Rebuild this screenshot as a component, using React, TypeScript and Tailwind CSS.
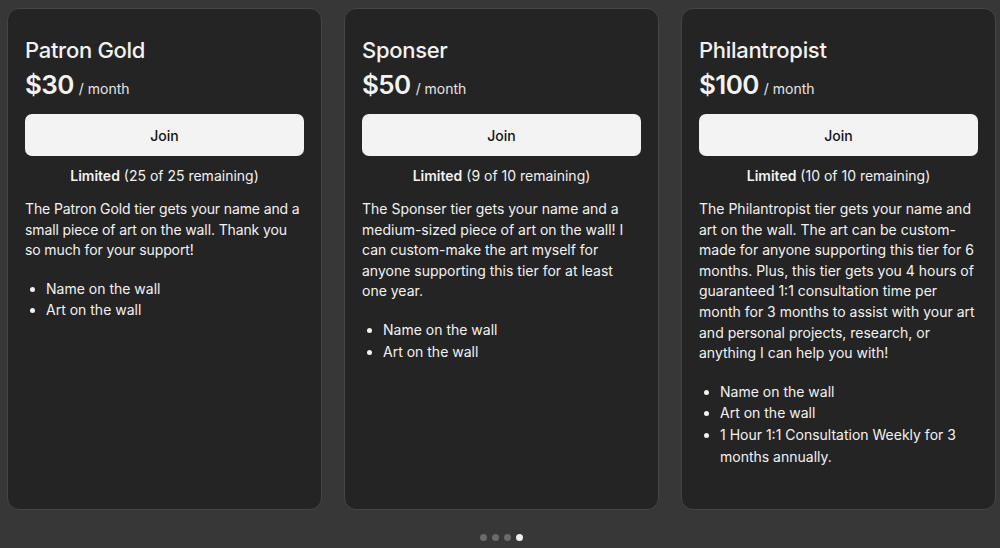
import React from "react";

const tiers = [
  {
    name: "Patron Gold",
    price: "$30",
    limited: "(25 of 25 remaining)",
    desc: "The Patron Gold tier gets your name and a small piece of art on the wall. Thank you so much for your support!",
    descClass: "tracking-[-0.12px]",
    items: ["Name on the wall", "Art on the wall"],
  },
  {
    name: "Sponser",
    price: "$50",
    limited: "(9 of 10 remaining)",
    desc: "The Sponser tier gets your name and a medium-sized piece of art on the wall! I can custom-make the art myself for anyone supporting this tier for at least one year.",
    descClass: "tracking-normal",
    items: ["Name on the wall", "Art on the wall"],
  },
  {
    name: "Philantropist",
    price: "$100",
    limited: "(10 of 10 remaining)",
    desc: "The Philantropist tier gets your name and art on the wall. The art can be custom-made for anyone supporting this tier for 6 months. Plus, this tier gets you 4 hours of guaranteed 1:1 consultation time per month for 3 months to assist with your art and personal projects, research, or anything I can help you with!",
    descClass: "tracking-normal",
    items: ["Name on the wall", "Art on the wall", "1 Hour 1:1 Consultation Weekly for 3 months annually."],
  },
];

export default function App() {
  return (
    <div
      className="w-[1000px] h-[548px] bg-[#373737] overflow-hidden flex flex-col"
      style={{ fontFamily: "Inter, 'Noto Sans', sans-serif" }}
    >
      <div className="flex gap-[22px] pl-[7px] pt-[8px]">
        {tiers.map((t) => (
          <div
            key={t.name}
            className="w-[315px] h-[502px] shrink-0 rounded-[12px] border border-[#454545] bg-[#242424] px-[17px] pt-[26px] text-[#f2f2f2]"
          >
            <div className="text-[22px] leading-[30px] font-medium tracking-[-0.3px]">{t.name}</div>
            <div className="flex items-baseline gap-[5px] mt-[2px]">
              <span className="text-[26px] leading-[36px] font-semibold tracking-[-0.6px]">{t.price}</span>
              <span className="text-[14px] text-[#e6e6e6]">/ month</span>
            </div>
            <button className="mt-[11px] w-full h-[42px] rounded-[7px] bg-[#f3f3f3] text-[#111] text-[14px] font-medium">
              Join
            </button>
            <div className="mt-[9px] text-center text-[14px] leading-[22px]">
              <span className="font-semibold">Limited</span> {t.limited}
            </div>
            <p className={`mt-[12px] text-[14px] leading-[20.6px] ${t.descClass}`}>{t.desc}</p>
            <ul className="mt-[17px] pl-[21px] list-disc text-[14px] leading-[21.7px]">
              {t.items.map((i) => (
                <li key={i}>{i}</li>
              ))}
            </ul>
          </div>
        ))}
      </div>
      <div className="flex justify-center gap-[5px] mt-[24px] pl-[3px]">
        <span className="w-[7px] h-[7px] rounded-full bg-[#6a6a6a]" />
        <span className="w-[7px] h-[7px] rounded-full bg-[#6a6a6a]" />
        <span className="w-[7px] h-[7px] rounded-full bg-[#6a6a6a]" />
        <span className="w-[7px] h-[7px] rounded-full bg-[#f0f0f0]" />
      </div>
    </div>
  );
}
